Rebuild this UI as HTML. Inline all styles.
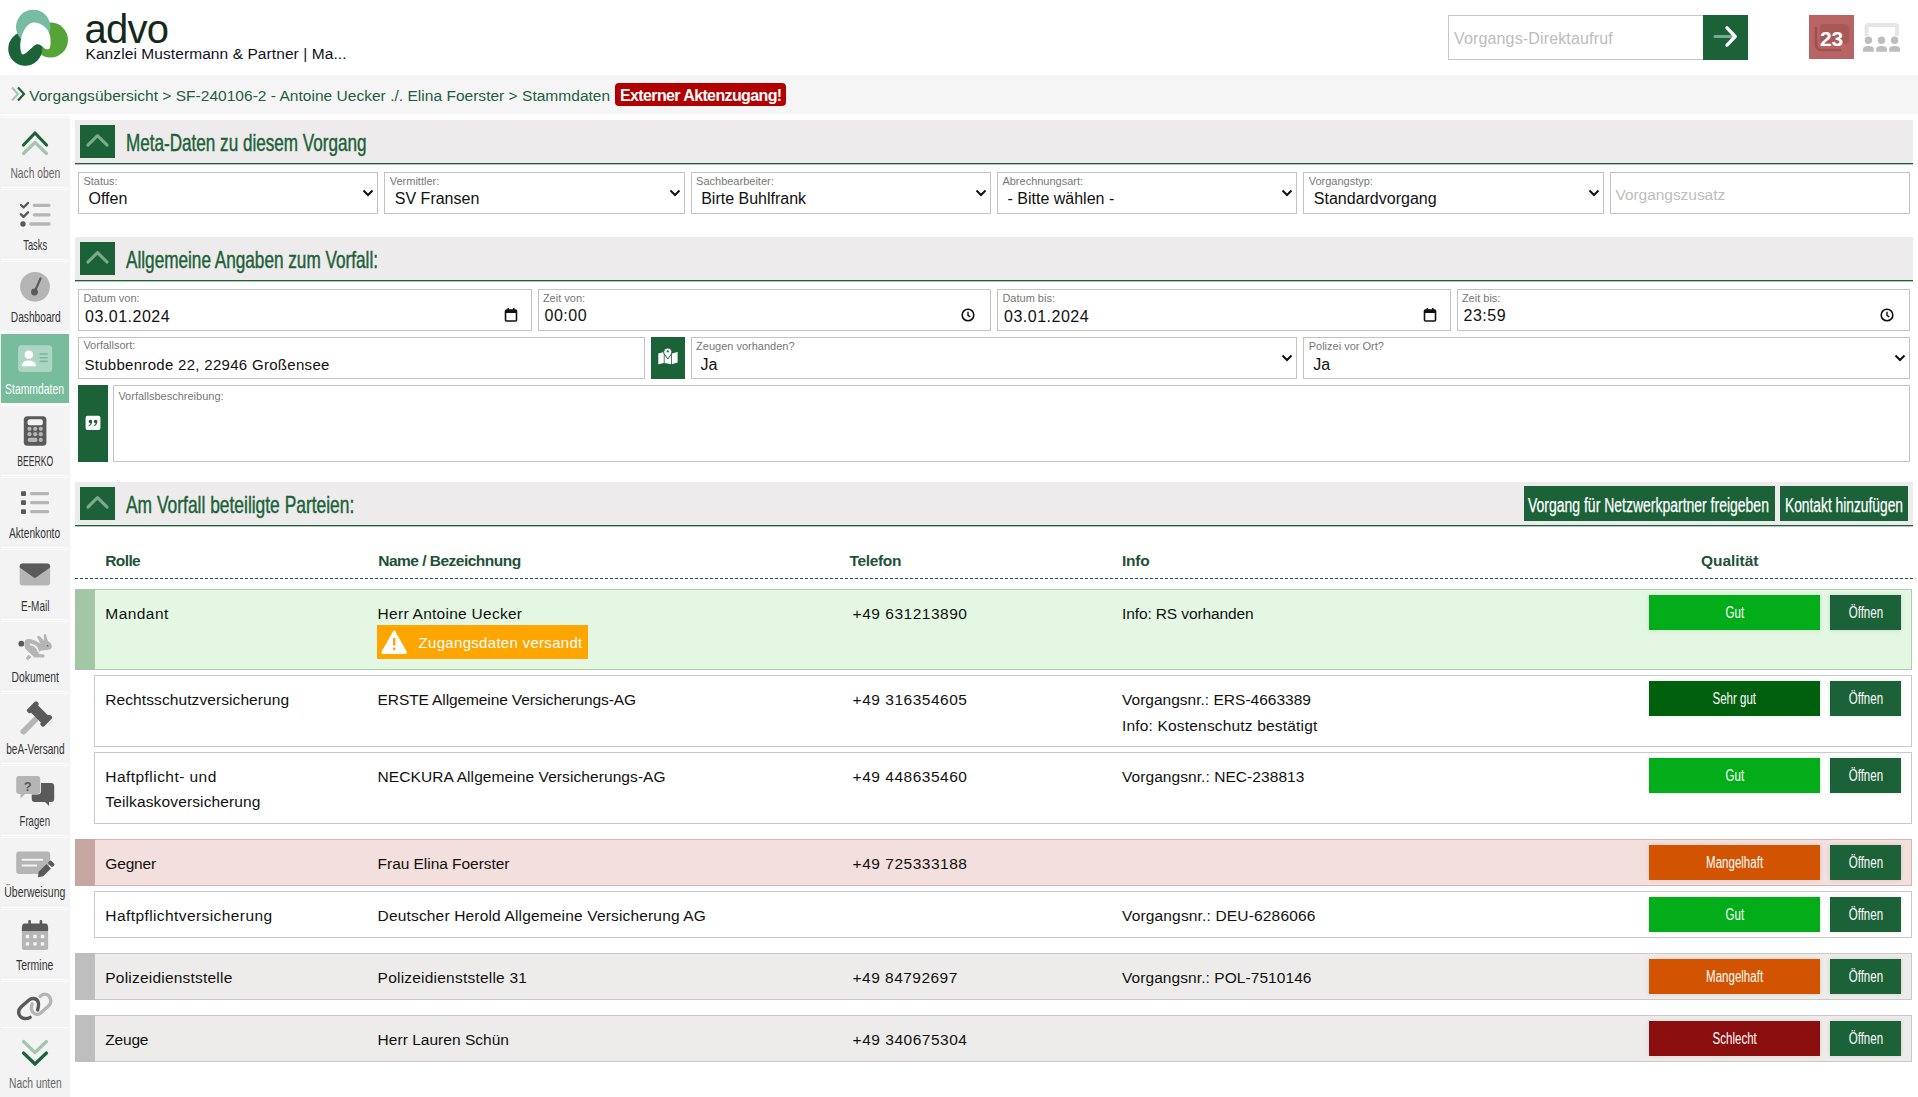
<!DOCTYPE html>
<html lang="de"><head><meta charset="utf-8"><title>advo – Stammdaten</title>
<style>
html,body{margin:0;padding:0;}
body{width:1918px;height:1097px;position:relative;overflow:hidden;background:#ffffff;font-family:"Liberation Sans", sans-serif;}
svg{display:block;overflow:visible;}
</style></head><body>
<svg style="position:absolute;left:0px;top:0px;" width="75" height="72" viewBox="0 0 75 72"><circle cx="50.5" cy="40" r="17.5" fill="#56a338"/><circle cx="25.2" cy="48.8" r="17" fill="#1b6338"/><circle cx="33.2" cy="27" r="17.2" fill="#77bba2"/><path d="M20.7 40.6 C22.5 30 28 22.5 34 22.5 C41 22.5 48.5 28 50 36 C50.8 40 51 46 49.5 48.5 C48 50 45.5 49.5 43.5 47.5 C41 45 38.5 43.5 36 44.5 C33 46 29.5 50.5 26 53 C23.5 55 21.5 55 21 52 C20 48 20 44 20.7 40.6 Z" fill="#ffffff"/></svg>
<div style="position:absolute;left:84.5px;top:8.74px;font-size:40px;line-height:40px;color:#15291b;font-weight:normal;letter-spacing:-0.747px;white-space:nowrap;">advo</div>
<div style="position:absolute;left:85.5px;top:46.38px;font-size:15.5px;line-height:15.5px;color:#111122;font-weight:normal;letter-spacing:0.081px;white-space:nowrap;">Kanzlei Mustermann &amp; Partner | Ma...</div>
<div style="position:absolute;left:1448px;top:15px;width:256px;height:45px;box-sizing:border-box;border:1px solid #c6c6c6;background:#fff;"></div>
<div style="position:absolute;left:1454px;top:30.76px;font-size:16px;line-height:16px;color:#bdbdbd;font-weight:normal;letter-spacing:0.15px;white-space:nowrap;">Vorgangs-Direktaufruf</div>
<div style="position:absolute;left:1703px;top:15px;width:45px;height:45px;background:#1c6239;"></div>
<svg style="position:absolute;left:1703px;top:15px;" width="45" height="44" viewBox="0 0 45 44"><path d="M12 21.5 H31" stroke="#7fa98f" stroke-width="3" stroke-linecap="round"/><path d="M24 12.8 L32.2 21.5 L24 30.2" stroke="#fff" stroke-width="3.3" fill="none" stroke-linecap="round" stroke-linejoin="round"/></svg>
<div style="position:absolute;left:1809px;top:15px;width:45px;height:44px;background:#b86464;"></div>
<svg style="position:absolute;left:1809px;top:15px;" width="45" height="44" viewBox="0 0 45 44"><rect x="11" y="9" width="29" height="20" rx="4" fill="#a95858"/><path d="M7 13 V29 Q7 35 13 35 H31" stroke="#a14f4f" stroke-width="2.6" fill="none" stroke-linecap="round"/></svg>
<div style="position:absolute;left:1820px;top:27.92px;font-size:21px;line-height:21px;color:#ffffff;font-weight:bold;letter-spacing:-0.3px;white-space:nowrap;">23</div>
<svg style="position:absolute;left:1860px;top:18px;" width="45" height="40" viewBox="0 0 45 40"><path d="M6.5 18 V9 Q6.5 7 8.5 7 H35 Q37 7 37 9 V18" stroke="#e6e6e6" stroke-width="4" fill="none"/><circle cx="8.4" cy="22.3" r="3.7" fill="#bdbdbd"/><circle cx="21.5" cy="22.3" r="3.7" fill="#bdbdbd"/><circle cx="34.6" cy="22.3" r="3.7" fill="#bdbdbd"/><path d="M3 33.7 V31 Q3 28 8.4 28 Q13.8 28 13.8 31 V33.7 Z" fill="#bdbdbd"/><path d="M16.1 33.7 V31 Q16.1 28 21.5 28 Q26.9 28 26.9 31 V33.7 Z" fill="#bdbdbd"/><path d="M29.2 33.7 V31 Q29.2 28 34.6 28 Q40 28 40 31 V33.7 Z" fill="#bdbdbd"/></svg>
<div style="position:absolute;left:0px;top:75px;width:1918px;height:39px;background:#f5f5f5;"></div>
<svg style="position:absolute;left:8px;top:84px;" width="22" height="22" viewBox="0 0 22 22"><path d="M4 3.5 L10 10 L4 16.5" stroke="#a9c7b1" stroke-width="2.2" fill="none"/><path d="M10 3.5 L16 10 L10 16.5" stroke="#1c6239" stroke-width="2.2" fill="none"/></svg>
<div style="position:absolute;left:29.2px;top:88.28px;font-size:15.5px;line-height:15.5px;color:#1e5e40;font-weight:normal;letter-spacing:0.025px;white-space:nowrap;">Vorgangsübersicht &gt; SF-240106-2 - Antoine Uecker ./. Elina Foerster &gt; Stammdaten</div>
<div style="position:absolute;left:615px;top:83px;width:171px;height:23px;background:#b00000;border-radius:4px;"></div>
<div style="position:absolute;left:620px;top:88.46px;font-size:16px;line-height:16px;color:#ffffff;font-weight:bold;letter-spacing:-0.62px;white-space:nowrap;">Externer Aktenzugang!</div>
<div style="position:absolute;left:0px;top:116px;width:70px;height:981px;background:#f3f3f3;"></div>
<div style="position:absolute;left:1px;top:117px;width:68px;height:1px;background:#ffffff;"></div>
<div style="position:absolute;left:1px;top:187px;width:68px;height:1px;background:#ffffff;"></div>
<div style="position:absolute;left:1px;top:189px;width:68px;height:1px;background:#ffffff;"></div>
<div style="position:absolute;left:1px;top:259px;width:68px;height:1px;background:#ffffff;"></div>
<div style="position:absolute;left:1px;top:261px;width:68px;height:1px;background:#ffffff;"></div>
<div style="position:absolute;left:1px;top:331px;width:68px;height:1px;background:#ffffff;"></div>
<div style="position:absolute;left:1px;top:333px;width:68px;height:1px;background:#ffffff;"></div>
<div style="position:absolute;left:1px;top:403px;width:68px;height:1px;background:#ffffff;"></div>
<div style="position:absolute;left:1px;top:405px;width:68px;height:1px;background:#ffffff;"></div>
<div style="position:absolute;left:1px;top:475px;width:68px;height:1px;background:#ffffff;"></div>
<div style="position:absolute;left:1px;top:477px;width:68px;height:1px;background:#ffffff;"></div>
<div style="position:absolute;left:1px;top:547px;width:68px;height:1px;background:#ffffff;"></div>
<div style="position:absolute;left:1px;top:549px;width:68px;height:1px;background:#ffffff;"></div>
<div style="position:absolute;left:1px;top:619px;width:68px;height:1px;background:#ffffff;"></div>
<div style="position:absolute;left:1px;top:621px;width:68px;height:1px;background:#ffffff;"></div>
<div style="position:absolute;left:1px;top:691px;width:68px;height:1px;background:#ffffff;"></div>
<div style="position:absolute;left:1px;top:693px;width:68px;height:1px;background:#ffffff;"></div>
<div style="position:absolute;left:1px;top:763px;width:68px;height:1px;background:#ffffff;"></div>
<div style="position:absolute;left:1px;top:765px;width:68px;height:1px;background:#ffffff;"></div>
<div style="position:absolute;left:1px;top:835px;width:68px;height:1px;background:#ffffff;"></div>
<div style="position:absolute;left:1px;top:837px;width:68px;height:1px;background:#ffffff;"></div>
<div style="position:absolute;left:1px;top:907px;width:68px;height:1px;background:#ffffff;"></div>
<div style="position:absolute;left:1px;top:909px;width:68px;height:1px;background:#ffffff;"></div>
<div style="position:absolute;left:1px;top:979px;width:68px;height:1px;background:#ffffff;"></div>
<div style="position:absolute;left:1px;top:981px;width:68px;height:1px;background:#ffffff;"></div>
<div style="position:absolute;left:1px;top:1027px;width:68px;height:1px;background:#ffffff;"></div>
<div style="position:absolute;left:1px;top:334px;width:68px;height:69px;background:#77bc9c;"></div>
<svg style="position:absolute;left:15px;top:122px;" width="40" height="40" viewBox="0 0 40 40"><path d="M8.5 23 L20 11 L31.5 23" stroke="#1c6239" stroke-width="3.2" fill="none" stroke-linecap="round" stroke-linejoin="round"/><path d="M8.5 31.5 L20 20.5 L31.5 31.5" stroke="#a3c5ae" stroke-width="3.2" fill="none" stroke-linecap="round" stroke-linejoin="round"/></svg>
<div style="position:absolute;left:-264.95px;width:600px;top:165.20px;text-align:center;font-size:15px;line-height:15px;color:#666666;font-weight:normal;letter-spacing:0px;white-space:nowrap;"><span style="display:inline-block;transform:scaleX(0.685);transform-origin:50% 0;">Nach oben</span></div>
<svg style="position:absolute;left:15px;top:198px;" width="40" height="34" viewBox="0 0 40 34"><path d="M6 7 L8.5 9.5 L13 5" stroke="#5a5a5a" stroke-width="2.4" fill="none" stroke-linecap="round" stroke-linejoin="round"/><path d="M6 16.3 L8.5 18.8 L13 14.3" stroke="#5a5a5a" stroke-width="2.4" fill="none" stroke-linecap="round" stroke-linejoin="round"/><circle cx="8" cy="26" r="2.7" fill="#5a5a5a"/><path d="M19.3 7.3 H34 M19.3 16.8 H34 M15.8 26 H34" stroke="#b5b5b5" stroke-width="3.3" stroke-linecap="round"/></svg>
<div style="position:absolute;left:-264.9px;width:600px;top:237.30px;text-align:center;font-size:15px;line-height:15px;color:#333333;font-weight:normal;letter-spacing:0px;white-space:nowrap;"><span style="display:inline-block;transform:scaleX(0.6233);transform-origin:50% 0;">Tasks</span></div>
<svg style="position:absolute;left:15px;top:267px;" width="40" height="40" viewBox="0 0 40 40"><circle cx="20" cy="19.8" r="14.9" fill="#b5b5b5"/><path d="M25.5 11.5 L20 24" stroke="#5a5a5a" stroke-width="2.2" stroke-linecap="round"/><circle cx="19.5" cy="25" r="3.4" fill="#5a5a5a"/></svg>
<div style="position:absolute;left:-264.8px;width:600px;top:309.00px;text-align:center;font-size:15px;line-height:15px;color:#333333;font-weight:normal;letter-spacing:0px;white-space:nowrap;"><span style="display:inline-block;transform:scaleX(0.6786);transform-origin:50% 0;">Dashboard</span></div>
<svg style="position:absolute;left:15px;top:340px;" width="40" height="40" viewBox="0 0 40 40"><rect x="3.1" y="5.2" width="34.1" height="26.8" rx="3.5" fill="#acd6c3"/><circle cx="13.8" cy="14.8" r="4.3" fill="#fff"/><path d="M6.8 26.3 Q6.8 20.4 13.8 20.4 Q20.9 20.4 20.9 26.3 Z" fill="#fff"/><path d="M24.6 14 H32.8 M24.6 17.7 H32.8 M24.6 21.4 H32.8" stroke="#76bb9b" stroke-width="1.6"/></svg>
<div style="position:absolute;left:-265.1px;width:600px;top:381.00px;text-align:center;font-size:15px;line-height:15px;color:#ffffff;font-weight:normal;letter-spacing:0px;white-space:nowrap;"><span style="display:inline-block;transform:scaleX(0.6914);transform-origin:50% 0;">Stammdaten</span></div>
<svg style="position:absolute;left:15px;top:410px;" width="40" height="40" viewBox="0 0 40 40"><rect x="8.8" y="6.2" width="22.6" height="29.6" rx="3.6" fill="#5a5a5a"/><rect x="12.6" y="9.2" width="15.2" height="6" rx="2" fill="#f3f3f3"/><circle cx="14.5" cy="18.8" r="2.1" fill="#b5b5b5"/><circle cx="14.5" cy="24.2" r="2.1" fill="#b5b5b5"/><circle cx="20.2" cy="18.8" r="2.1" fill="#b5b5b5"/><circle cx="20.2" cy="24.2" r="2.1" fill="#b5b5b5"/><circle cx="25.8" cy="18.8" r="2.1" fill="#b5b5b5"/><circle cx="25.8" cy="24.2" r="2.1" fill="#b5b5b5"/><rect x="12.6" y="27.8" width="10" height="4.2" rx="2.1" fill="#b5b5b5"/><circle cx="25.8" cy="29.9" r="2.1" fill="#b5b5b5"/></svg>
<div style="position:absolute;left:-265px;width:600px;top:453.10px;text-align:center;font-size:15px;line-height:15px;color:#333333;font-weight:normal;letter-spacing:0px;white-space:nowrap;"><span style="display:inline-block;transform:scaleX(0.5758);transform-origin:50% 0;">BEERKO</span></div>
<svg style="position:absolute;left:15px;top:485px;" width="40" height="40" viewBox="0 0 40 40"><rect x="6" y="6.3" width="5" height="4.6" rx="1" fill="#5a5a5a"/><rect x="6" y="15.3" width="5" height="4.6" rx="1" fill="#5a5a5a"/><rect x="6" y="24.3" width="5" height="4.6" rx="1" fill="#5a5a5a"/><path d="M16.5 8.6 H32.7 M16.5 17.6 H32.7 M16.5 26.6 H32.7" stroke="#b5b5b5" stroke-width="3.2" stroke-linecap="round"/></svg>
<div style="position:absolute;left:-265.4px;width:600px;top:525.30px;text-align:center;font-size:15px;line-height:15px;color:#333333;font-weight:normal;letter-spacing:0px;white-space:nowrap;"><span style="display:inline-block;transform:scaleX(0.6822);transform-origin:50% 0;">Aktenkonto</span></div>
<svg style="position:absolute;left:15px;top:555px;" width="40" height="40" viewBox="0 0 40 40"><rect x="4.7" y="8.5" width="30.4" height="22" rx="3" fill="#b5b5b5"/><path d="M4.7 11.5 Q4.7 8.5 7.7 8.5 H32.1 Q35.1 8.5 35.1 11.5 V12.5 L21 22.5 Q19.9 23.3 18.8 22.5 L4.7 12.5 Z" fill="#5a5a5a"/></svg>
<div style="position:absolute;left:-265.1px;width:600px;top:597.50px;text-align:center;font-size:15px;line-height:15px;color:#333333;font-weight:normal;letter-spacing:0px;white-space:nowrap;"><span style="display:inline-block;transform:scaleX(0.6682);transform-origin:50% 0;">E-Mail</span></div>
<svg style="position:absolute;left:15px;top:627px;" width="40" height="40" viewBox="0 0 40 40"><circle cx="6.3" cy="16.7" r="2.9" fill="#5a5a5a"/><path d="M9.5 16 C9.5 13 11 12 13.5 12 C17 12 21.5 14 25.5 16.5 L22.5 11 C21.5 9 23 8.2 24.5 9.2 C26 10.5 28 12.5 29 14 L28.8 9 C28.8 6.5 30.5 6.5 31.2 8.5 L33 14.3 C35.5 15.5 37 17.5 36.8 19.8 C36.5 22 35 22.8 33 22.8 L27 23.4 C25.5 23.6 24.3 24 24 25 L23.5 27 L28 27.2 C30 27.2 30 30.6 28 30.6 L19.5 30.6 L10 21.5 C9.6 20 9.5 18 9.5 16 Z" fill="#b5b5b5"/><path d="M15.5 17.4 C19 18 22.5 20.5 23.3 24.5" stroke="#f3f3f3" stroke-width="1.6" fill="none" stroke-linecap="round"/><path d="M11.3 31.5 L13.4 28.3 L16 30 L12.5 32.8 Z" fill="#b5b5b5" stroke="#b5b5b5" stroke-width="1" stroke-linejoin="round"/><circle cx="32.5" cy="18.7" r="0.8" fill="#5a5a5a"/></svg>
<div style="position:absolute;left:-264.8px;width:600px;top:669.10px;text-align:center;font-size:15px;line-height:15px;color:#333333;font-weight:normal;letter-spacing:0px;white-space:nowrap;"><span style="display:inline-block;transform:scaleX(0.6904);transform-origin:50% 0;">Dokument</span></div>
<svg style="position:absolute;left:15px;top:700px;" width="40" height="40" viewBox="0 0 40 40"><path d="M8.5 31.5 L20 20" stroke="#b5b5b5" stroke-width="6" stroke-linecap="round"/><g transform="rotate(45 24.5 14)"><rect x="14.5" y="9" width="20" height="10" rx="1" fill="#5a5a5a"/><rect x="12.5" y="7" width="5" height="14" rx="1.8" fill="#5a5a5a"/><rect x="31.5" y="7" width="5" height="14" rx="1.8" fill="#5a5a5a"/></g></svg>
<div style="position:absolute;left:-264.85px;width:600px;top:740.70px;text-align:center;font-size:15px;line-height:15px;color:#333333;font-weight:normal;letter-spacing:0px;white-space:nowrap;"><span style="display:inline-block;transform:scaleX(0.6722);transform-origin:50% 0;">beA-Versand</span></div>
<svg style="position:absolute;left:15px;top:770px;" width="40" height="40" viewBox="0 0 40 40"><path d="M4 6 Q1.2 6 1.2 9 V21 Q1.2 24 4 24 H5.5 V28.5 L10 24 H22.5 Q25.3 24 25.3 21 V9 Q25.3 6 22.5 6 Z" fill="#b5b5b5"/><path d="M20 13 H36 Q39.2 13 39.2 16 V29 Q39.2 32 36 32 H34 V36 L30 32 H19.7 Q16.7 32 16.7 29 V24.5 H22.5 Q26 24.5 26 21 V13 Z" fill="#5a5a5a"/><text x="12.7" y="20.5" font-family="Liberation Sans" font-weight="bold" font-size="13" fill="#5a5a5a" text-anchor="middle">?</text></svg>
<div style="position:absolute;left:-265px;width:600px;top:813.30px;text-align:center;font-size:15px;line-height:15px;color:#333333;font-weight:normal;letter-spacing:0px;white-space:nowrap;"><span style="display:inline-block;transform:scaleX(0.6396);transform-origin:50% 0;">Fragen</span></div>
<svg style="position:absolute;left:15px;top:845px;" width="40" height="40" viewBox="0 0 40 40"><path d="M4.2 6.5 Q1.2 6.5 1.2 9.5 V26 Q1.2 29 4.2 29 H25 L35.2 19 V9.5 Q35.2 6.5 32.2 6.5 Z" fill="#b5b5b5"/><path d="M6.8 14.8 H28 M6.8 20.4 H22" stroke="#f3f3f3" stroke-width="2"/><g transform="rotate(-45 22.8 32.2)"><path d="M22.8 32.2 L27.3 29 H38.3 V35.4 H27.3 Z" fill="#5a5a5a"/><rect x="39.8" y="29" width="4.2" height="6.4" rx="1.4" fill="#5a5a5a"/></g></svg>
<div style="position:absolute;left:-264.9px;width:600px;top:884.30px;text-align:center;font-size:15px;line-height:15px;color:#333333;font-weight:normal;letter-spacing:0px;white-space:nowrap;"><span style="display:inline-block;transform:scaleX(0.6968);transform-origin:50% 0;">Überweisung</span></div>
<svg style="position:absolute;left:15px;top:915px;" width="40" height="40" viewBox="0 0 40 40"><rect x="6.9" y="10.4" width="26.2" height="24.6" rx="2.5" fill="#b5b5b5"/><path d="M6.9 12.9 Q6.9 8.4 9.4 8.4 H30.6 Q33.1 8.4 33.1 12.9 V16 H6.9 Z" fill="#5a5a5a"/><rect x="13.3" y="4.9" width="2.6" height="5" rx="1" fill="#5a5a5a"/><rect x="24.6" y="4.9" width="2.6" height="5" rx="1" fill="#5a5a5a"/><rect x="10.8" y="19.8" width="3.4" height="3.4" fill="#f3f3f3"/><rect x="10.8" y="27.2" width="3.4" height="3.4" fill="#f3f3f3"/><rect x="18.3" y="19.8" width="3.4" height="3.4" fill="#f3f3f3"/><rect x="18.3" y="27.2" width="3.4" height="3.4" fill="#f3f3f3"/><rect x="25.8" y="19.8" width="3.4" height="3.4" fill="#f3f3f3"/><rect x="25.8" y="27.2" width="3.4" height="3.4" fill="#f3f3f3"/></svg>
<div style="position:absolute;left:-265.25px;width:600px;top:957.10px;text-align:center;font-size:15px;line-height:15px;color:#333333;font-weight:normal;letter-spacing:0px;white-space:nowrap;"><span style="display:inline-block;transform:scaleX(0.6991);transform-origin:50% 0;">Termine</span></div>
<svg style="position:absolute;left:0px;top:980px;" width="70" height="50" viewBox="0 0 70 50"><path d="M30.1 37.4 C27 39 22 39.5 19.6 35.5 C18 32.5 18.5 29.5 21 27 L29 20 C32 17.5 36.5 18 38 21.5 C39 24 38.5 27 37.6 29.9" stroke="#5a5a5a" stroke-width="3.4" fill="none" stroke-linecap="round"/><path d="M32.2 23.8 C31 27 31 30 33 32.3 C35 34.5 38.5 35 41 32.8 L49 25.5 C51.5 23 51.5 18.5 48.5 15.5 C46 13.5 42.5 13.5 40.2 16.5" stroke="#b5b5b5" stroke-width="3.4" fill="none" stroke-linecap="round"/></svg>
<svg style="position:absolute;left:15px;top:1033px;" width="40" height="40" viewBox="0 0 40 40"><path d="M8.5 8.5 L20 19.5 L31.5 8.5" stroke="#a3c5ae" stroke-width="3.2" fill="none" stroke-linecap="round" stroke-linejoin="round"/><path d="M8.5 20 L20 31 L31.5 20" stroke="#1c6239" stroke-width="3.2" fill="none" stroke-linecap="round" stroke-linejoin="round"/></svg>
<div style="position:absolute;left:-265px;width:600px;top:1075.20px;text-align:center;font-size:15px;line-height:15px;color:#666666;font-weight:normal;letter-spacing:0px;white-space:nowrap;"><span style="display:inline-block;transform:scaleX(0.6843);transform-origin:50% 0;">Nach unten</span></div>
<div style="position:absolute;left:75px;top:120px;width:1838px;height:43px;background:#edebeb;"></div>
<div style="position:absolute;left:75px;top:163px;width:1838px;height:1px;background:#1c6239;"></div>
<div style="position:absolute;left:75px;top:164px;width:1838px;height:1px;background:rgba(28,98,57,0.35);"></div>
<div style="position:absolute;left:80px;top:125px;width:35px;height:33px;background:#1c6239;"></div>
<svg style="position:absolute;left:80px;top:125px;" width="35" height="33" viewBox="0 0 35 33"><path d="M7.9 20.1 L17.5 10.6 L27.1 20.1" stroke="#7fa98f" stroke-width="3" fill="none" stroke-linecap="round" stroke-linejoin="round"/></svg>
<div style="position:absolute;left:125.5px;top:130.88px;font-size:24px;line-height:24px;color:#1c6239;font-weight:normal;letter-spacing:0px;white-space:nowrap;transform:scaleX(0.7125);transform-origin:0 0;-webkit-text-stroke:0.45px #1c6239;">Meta-Daten zu diesem Vorgang</div>
<div style="position:absolute;left:75px;top:237px;width:1838px;height:43px;background:#edebeb;"></div>
<div style="position:absolute;left:75px;top:280px;width:1838px;height:1px;background:#1c6239;"></div>
<div style="position:absolute;left:75px;top:281px;width:1838px;height:1px;background:rgba(28,98,57,0.35);"></div>
<div style="position:absolute;left:80px;top:242px;width:35px;height:33px;background:#1c6239;"></div>
<svg style="position:absolute;left:80px;top:242px;" width="35" height="33" viewBox="0 0 35 33"><path d="M7.9 20.1 L17.5 10.6 L27.1 20.1" stroke="#7fa98f" stroke-width="3" fill="none" stroke-linecap="round" stroke-linejoin="round"/></svg>
<div style="position:absolute;left:125.5px;top:247.88px;font-size:24px;line-height:24px;color:#1c6239;font-weight:normal;letter-spacing:0px;white-space:nowrap;transform:scaleX(0.7154);transform-origin:0 0;-webkit-text-stroke:0.45px #1c6239;">Allgemeine Angaben zum Vorfall:</div>
<div style="position:absolute;left:75px;top:482px;width:1838px;height:43px;background:#edebeb;"></div>
<div style="position:absolute;left:75px;top:525px;width:1838px;height:1px;background:#1c6239;"></div>
<div style="position:absolute;left:75px;top:526px;width:1838px;height:1px;background:rgba(28,98,57,0.35);"></div>
<div style="position:absolute;left:80px;top:487px;width:35px;height:33px;background:#1c6239;"></div>
<svg style="position:absolute;left:80px;top:487px;" width="35" height="33" viewBox="0 0 35 33"><path d="M7.9 20.1 L17.5 10.6 L27.1 20.1" stroke="#7fa98f" stroke-width="3" fill="none" stroke-linecap="round" stroke-linejoin="round"/></svg>
<div style="position:absolute;left:125.5px;top:492.88px;font-size:24px;line-height:24px;color:#1c6239;font-weight:normal;letter-spacing:0px;white-space:nowrap;transform:scaleX(0.7251);transform-origin:0 0;-webkit-text-stroke:0.45px #1c6239;">Am Vorfall beteiligte Parteien:</div>
<div style="position:absolute;left:1524px;top:486px;width:251px;height:35px;background:#1c6239;"></div>
<div style="position:absolute;left:1528.4px;top:495.07px;font-size:20px;line-height:20px;color:#fff;font-weight:normal;letter-spacing:0px;white-space:nowrap;transform:scaleX(0.699);transform-origin:0 0;-webkit-text-stroke:0.25px #fff;">Vorgang für Netzwerkpartner freigeben</div>
<div style="position:absolute;left:1780px;top:486px;width:128px;height:35px;background:#1c6239;"></div>
<div style="position:absolute;left:1785px;top:495.07px;font-size:20px;line-height:20px;color:#fff;font-weight:normal;letter-spacing:0px;white-space:nowrap;transform:scaleX(0.689);transform-origin:0 0;-webkit-text-stroke:0.25px #fff;">Kontakt hinzufügen</div>
<div style="position:absolute;left:78.0px;top:172px;width:300.33px;height:42px;box-sizing:border-box;border:1px solid #c3c3c3;background:#fff;"></div>
<div style="position:absolute;left:83.4px;top:175.99px;font-size:11px;line-height:11px;color:#777777;font-weight:normal;letter-spacing:0px;white-space:nowrap;">Status:</div>
<div style="position:absolute;left:88.5px;top:191.36px;font-size:16px;line-height:16px;color:#111111;font-weight:normal;letter-spacing:0px;white-space:nowrap;">Offen</div>
<svg style="position:absolute;left:361.33px;top:188px;" width="14" height="10" viewBox="0 0 14 10"><path d="M2.5 2.5 L7 7 L11.5 2.5" stroke="#111" stroke-width="2" fill="none"/></svg>
<div style="position:absolute;left:384.33px;top:172px;width:300.33px;height:42px;box-sizing:border-box;border:1px solid #c3c3c3;background:#fff;"></div>
<div style="position:absolute;left:389.72999999999996px;top:175.99px;font-size:11px;line-height:11px;color:#777777;font-weight:normal;letter-spacing:0px;white-space:nowrap;">Vermittler:</div>
<div style="position:absolute;left:394.83px;top:191.36px;font-size:16px;line-height:16px;color:#111111;font-weight:normal;letter-spacing:0px;white-space:nowrap;">SV Fransen</div>
<svg style="position:absolute;left:667.66px;top:188px;" width="14" height="10" viewBox="0 0 14 10"><path d="M2.5 2.5 L7 7 L11.5 2.5" stroke="#111" stroke-width="2" fill="none"/></svg>
<div style="position:absolute;left:690.67px;top:172px;width:300.33px;height:42px;box-sizing:border-box;border:1px solid #c3c3c3;background:#fff;"></div>
<div style="position:absolute;left:696.0699999999999px;top:175.99px;font-size:11px;line-height:11px;color:#777777;font-weight:normal;letter-spacing:0px;white-space:nowrap;">Sachbearbeiter:</div>
<div style="position:absolute;left:701.17px;top:191.36px;font-size:16px;line-height:16px;color:#111111;font-weight:normal;letter-spacing:0px;white-space:nowrap;">Birte Buhlfrank</div>
<svg style="position:absolute;left:974.0px;top:188px;" width="14" height="10" viewBox="0 0 14 10"><path d="M2.5 2.5 L7 7 L11.5 2.5" stroke="#111" stroke-width="2" fill="none"/></svg>
<div style="position:absolute;left:997.0px;top:172px;width:300.33px;height:42px;box-sizing:border-box;border:1px solid #c3c3c3;background:#fff;"></div>
<div style="position:absolute;left:1002.4px;top:175.99px;font-size:11px;line-height:11px;color:#777777;font-weight:normal;letter-spacing:0px;white-space:nowrap;">Abrechnungsart:</div>
<div style="position:absolute;left:1007.5px;top:191.36px;font-size:16px;line-height:16px;color:#111111;font-weight:normal;letter-spacing:0px;white-space:nowrap;">- Bitte wählen -</div>
<svg style="position:absolute;left:1280.33px;top:188px;" width="14" height="10" viewBox="0 0 14 10"><path d="M2.5 2.5 L7 7 L11.5 2.5" stroke="#111" stroke-width="2" fill="none"/></svg>
<div style="position:absolute;left:1303.33px;top:172px;width:300.33px;height:42px;box-sizing:border-box;border:1px solid #c3c3c3;background:#fff;"></div>
<div style="position:absolute;left:1308.73px;top:175.99px;font-size:11px;line-height:11px;color:#777777;font-weight:normal;letter-spacing:0px;white-space:nowrap;">Vorgangstyp:</div>
<div style="position:absolute;left:1313.83px;top:191.36px;font-size:16px;line-height:16px;color:#111111;font-weight:normal;letter-spacing:0px;white-space:nowrap;">Standardvorgang</div>
<svg style="position:absolute;left:1586.6599999999999px;top:188px;" width="14" height="10" viewBox="0 0 14 10"><path d="M2.5 2.5 L7 7 L11.5 2.5" stroke="#111" stroke-width="2" fill="none"/></svg>
<div style="position:absolute;left:1609.67px;top:172px;width:300.33px;height:42px;box-sizing:border-box;border:1px solid #c3c3c3;background:#fff;"></div>
<div style="position:absolute;left:1615.47px;top:187.48px;font-size:15.5px;line-height:15.5px;color:#bdbdbd;font-weight:normal;letter-spacing:-0.046px;white-space:nowrap;">Vorgangszusatz</div>
<div style="position:absolute;left:78.0px;top:289px;width:453.5px;height:42px;box-sizing:border-box;border:1px solid #c3c3c3;background:#fff;"></div>
<div style="position:absolute;left:83.4px;top:292.59px;font-size:11px;line-height:11px;color:#777777;font-weight:normal;letter-spacing:0px;white-space:nowrap;">Datum von:</div>
<div style="position:absolute;left:85.0px;top:309.06px;font-size:16px;line-height:16px;color:#111111;font-weight:normal;letter-spacing:0.5px;white-space:nowrap;">03.01.2024</div>
<svg style="position:absolute;left:503.5px;top:307px;" width="14" height="16" viewBox="0 0 14 16"><rect x="1.5" y="3" width="11" height="11" rx="1" stroke="#111" stroke-width="1.6" fill="none"/><rect x="1.5" y="3" width="11" height="3" fill="#111"/><path d="M4.2 1 V3.5 M9.8 1 V3.5" stroke="#111" stroke-width="1.5"/></svg>
<div style="position:absolute;left:537.5px;top:289px;width:453.5px;height:42px;box-sizing:border-box;border:1px solid #c3c3c3;background:#fff;"></div>
<div style="position:absolute;left:542.9px;top:292.59px;font-size:11px;line-height:11px;color:#777777;font-weight:normal;letter-spacing:0px;white-space:nowrap;">Zeit von:</div>
<div style="position:absolute;left:544.5px;top:308.06px;font-size:16px;line-height:16px;color:#111111;font-weight:normal;letter-spacing:0.5px;white-space:nowrap;">00:00</div>
<svg style="position:absolute;left:959.5px;top:307px;" width="16" height="16" viewBox="0 0 16 16"><circle cx="8" cy="8" r="5.8" stroke="#111" stroke-width="1.6" fill="none"/><path d="M8 4.8 V8.3 L10.3 10" stroke="#111" stroke-width="1.4" fill="none"/></svg>
<div style="position:absolute;left:997.0px;top:289px;width:453.5px;height:42px;box-sizing:border-box;border:1px solid #c3c3c3;background:#fff;"></div>
<div style="position:absolute;left:1002.4px;top:292.59px;font-size:11px;line-height:11px;color:#777777;font-weight:normal;letter-spacing:0px;white-space:nowrap;">Datum bis:</div>
<div style="position:absolute;left:1004.0px;top:309.06px;font-size:16px;line-height:16px;color:#111111;font-weight:normal;letter-spacing:0.5px;white-space:nowrap;">03.01.2024</div>
<svg style="position:absolute;left:1422.5px;top:307px;" width="14" height="16" viewBox="0 0 14 16"><rect x="1.5" y="3" width="11" height="11" rx="1" stroke="#111" stroke-width="1.6" fill="none"/><rect x="1.5" y="3" width="11" height="3" fill="#111"/><path d="M4.2 1 V3.5 M9.8 1 V3.5" stroke="#111" stroke-width="1.5"/></svg>
<div style="position:absolute;left:1456.5px;top:289px;width:453.5px;height:42px;box-sizing:border-box;border:1px solid #c3c3c3;background:#fff;"></div>
<div style="position:absolute;left:1461.9px;top:292.59px;font-size:11px;line-height:11px;color:#777777;font-weight:normal;letter-spacing:0px;white-space:nowrap;">Zeit bis:</div>
<div style="position:absolute;left:1463.5px;top:308.06px;font-size:16px;line-height:16px;color:#111111;font-weight:normal;letter-spacing:0.5px;white-space:nowrap;">23:59</div>
<svg style="position:absolute;left:1878.5px;top:307px;" width="16" height="16" viewBox="0 0 16 16"><circle cx="8" cy="8" r="5.8" stroke="#111" stroke-width="1.6" fill="none"/><path d="M8 4.8 V8.3 L10.3 10" stroke="#111" stroke-width="1.4" fill="none"/></svg>
<div style="position:absolute;left:78px;top:337px;width:567px;height:42px;box-sizing:border-box;border:1px solid #c3c3c3;background:#fff;"></div>
<div style="position:absolute;left:83.4px;top:340.49px;font-size:11px;line-height:11px;color:#777777;font-weight:normal;letter-spacing:0px;white-space:nowrap;">Vorfallsort:</div>
<div style="position:absolute;left:84.4px;top:357.20px;font-size:15px;line-height:15px;color:#111111;font-weight:normal;letter-spacing:0.3px;white-space:nowrap;">Stubbenrode 22, 22946 Großensee</div>
<div style="position:absolute;left:651px;top:337px;width:34px;height:42px;background:#1c6239;"></div>
<svg style="position:absolute;left:651px;top:337px;" width="34" height="42" viewBox="0 0 34 42"><path d="M7.3 16.5 L12.8 15 V26 L7.3 27.2 Z M13.6 15 L20 16.5 V27.2 L13.6 26 Z M20.8 16.5 L26.6 15 V25.6 L20.8 27.2 Z" fill="#fff"/><path d="M16.8 22 L13.1 16.8 A4.1 4.1 0 1 1 20.5 16.8 Z" fill="#fff" stroke="#1c6239" stroke-width="1" stroke-linejoin="round"/><circle cx="16.8" cy="14.4" r="1.1" fill="#1c6239"/></svg>
<div style="position:absolute;left:690.67px;top:337px;width:606.67px;height:42px;box-sizing:border-box;border:1px solid #c3c3c3;background:#fff;"></div>
<div style="position:absolute;left:696.0699999999999px;top:341.49px;font-size:11px;line-height:11px;color:#777777;font-weight:normal;letter-spacing:0px;white-space:nowrap;">Zeugen vorhanden?</div>
<div style="position:absolute;left:700.5px;top:357.06px;font-size:16px;line-height:16px;color:#111111;font-weight:normal;letter-spacing:0px;white-space:nowrap;">Ja</div>
<svg style="position:absolute;left:1280.34px;top:353px;" width="14" height="10" viewBox="0 0 14 10"><path d="M2.5 2.5 L7 7 L11.5 2.5" stroke="#111" stroke-width="2" fill="none"/></svg>
<div style="position:absolute;left:1303.33px;top:337px;width:606.67px;height:42px;box-sizing:border-box;border:1px solid #c3c3c3;background:#fff;"></div>
<div style="position:absolute;left:1308.73px;top:341.49px;font-size:11px;line-height:11px;color:#777777;font-weight:normal;letter-spacing:0px;white-space:nowrap;">Polizei vor Ort?</div>
<div style="position:absolute;left:1313.2px;top:357.06px;font-size:16px;line-height:16px;color:#111111;font-weight:normal;letter-spacing:0px;white-space:nowrap;">Ja</div>
<svg style="position:absolute;left:1893.0px;top:353px;" width="14" height="10" viewBox="0 0 14 10"><path d="M2.5 2.5 L7 7 L11.5 2.5" stroke="#111" stroke-width="2" fill="none"/></svg>
<div style="position:absolute;left:78px;top:385px;width:30px;height:77px;background:#1c6239;"></div>
<svg style="position:absolute;left:78px;top:385px;" width="30" height="77" viewBox="0 0 30 77"><rect x="7.6" y="30.8" width="14.8" height="14.2" rx="2" fill="#fff"/><path d="M10.6 36.5 A1.8 1.8 0 1 1 14.200000000000001 36.6 C14.200000000000001 38.8 13.0 40.5 10.8 41.2 L10.4 40.4 C11.5 39.8 12.3 39.1 12.5 38.2 A1.8 1.8 0 0 1 10.6 36.5 Z" fill="#1c6239"/><path d="M15.8 36.5 A1.8 1.8 0 1 1 19.400000000000002 36.6 C19.400000000000002 38.8 18.200000000000003 40.5 16.0 41.2 L15.600000000000001 40.4 C16.700000000000003 39.8 17.5 39.1 17.700000000000003 38.2 A1.8 1.8 0 0 1 15.8 36.5 Z" fill="#1c6239"/></svg>
<div style="position:absolute;left:113px;top:385px;width:1797px;height:77px;box-sizing:border-box;border:1px solid #c3c3c3;background:#fff;"></div>
<div style="position:absolute;left:118.4px;top:390.69px;font-size:11px;line-height:11px;color:#777777;font-weight:normal;letter-spacing:0px;white-space:nowrap;">Vorfallsbeschreibung:</div>
<div style="position:absolute;left:105.3px;top:553.38px;font-size:15.5px;line-height:15.5px;color:#1d5236;font-weight:bold;letter-spacing:-0.624px;white-space:nowrap;">Rolle</div>
<div style="position:absolute;left:378.2px;top:553.38px;font-size:15.5px;line-height:15.5px;color:#1d5236;font-weight:bold;letter-spacing:-0.505px;white-space:nowrap;">Name / Bezeichnung</div>
<div style="position:absolute;left:849.5px;top:553.38px;font-size:15.5px;line-height:15.5px;color:#1d5236;font-weight:bold;letter-spacing:-0.344px;white-space:nowrap;">Telefon</div>
<div style="position:absolute;left:1122px;top:553.38px;font-size:15.5px;line-height:15.5px;color:#1d5236;font-weight:bold;letter-spacing:-0.202px;white-space:nowrap;">Info</div>
<div style="position:absolute;left:1701px;top:553.38px;font-size:15.5px;line-height:15.5px;color:#1d5236;font-weight:bold;letter-spacing:-0.029px;white-space:nowrap;">Qualität</div>
<div style="position:absolute;left:75px;top:578px;width:1838px;height:1px;background-image:linear-gradient(to right,#175e36 60%,transparent 60%);background-size:5px 1px;"></div>
<div style="position:absolute;left:75px;top:589px;width:1837px;height:81px;box-sizing:border-box;border:1px solid #a9d1aa;background:#e3f7e3;"></div>
<div style="position:absolute;left:75px;top:589px;width:20px;height:81px;background:#a3c6a4;"></div>
<div style="position:absolute;left:105.3px;top:606.38px;font-size:15.5px;line-height:15.5px;color:#111111;font-weight:normal;letter-spacing:0.446px;white-space:nowrap;">Mandant</div>
<div style="position:absolute;left:377.6px;top:606.38px;font-size:15.5px;line-height:15.5px;color:#111111;font-weight:normal;letter-spacing:0.269px;white-space:nowrap;">Herr Antoine Uecker</div>
<div style="position:absolute;left:852.6px;top:606.38px;font-size:15.5px;line-height:15.5px;color:#111111;font-weight:normal;letter-spacing:0.518px;white-space:nowrap;">+49 631213890</div>
<div style="position:absolute;left:1122px;top:606.38px;font-size:15.5px;line-height:15.5px;color:#111111;font-weight:normal;letter-spacing:-0.115px;white-space:nowrap;">Info: RS vorhanden</div>
<div style="position:absolute;left:1649px;top:595px;width:171px;height:35px;background:#03ad19;box-shadow:0 0 4px rgba(0,0,0,0.12);"></div>
<div style="position:absolute;left:1434.5px;width:600px;top:605.46px;text-align:center;font-size:16px;line-height:16px;color:#fff;font-weight:normal;letter-spacing:0px;white-space:nowrap;"><span style="display:inline-block;transform:scaleX(0.72);transform-origin:50% 0;">Gut</span></div>
<div style="position:absolute;left:1830px;top:595px;width:71px;height:35px;background:#1c6239;box-shadow:0 0 4px rgba(0,0,0,0.12);"></div>
<div style="position:absolute;left:1565.5px;width:600px;top:605.46px;text-align:center;font-size:16px;line-height:16px;color:#fff;font-weight:normal;letter-spacing:0px;white-space:nowrap;"><span style="display:inline-block;transform:scaleX(0.72);transform-origin:50% 0;">Öffnen</span></div>
<div style="position:absolute;left:377px;top:625px;width:211px;height:34px;background:#ffa500;"></div>
<svg style="position:absolute;left:377px;top:625px;" width="211" height="34" viewBox="0 0 211 34"><path d="M17.2 6.6 L28.6 26.6 Q29.3 28 27.8 28 H6.6 Q5.1 28 5.8 26.6 Z" fill="#fff" stroke="#fff" stroke-width="2" stroke-linejoin="round"/><path d="M17.2 13 V20.5" stroke="#ffa500" stroke-width="2.4"/><circle cx="17.2" cy="23.9" r="1.3" fill="#ffa500"/></svg>
<div style="position:absolute;left:418.6px;top:635.30px;font-size:15px;line-height:15px;color:#ffffff;font-weight:normal;letter-spacing:0.304px;white-space:nowrap;">Zugangsdaten versandt</div>
<div style="position:absolute;left:94px;top:675px;width:1818px;height:71.5px;box-sizing:border-box;border:1px solid #c9c9c9;background:#fff;"></div>
<div style="position:absolute;left:105.3px;top:692.38px;font-size:15.5px;line-height:15.5px;color:#111111;font-weight:normal;letter-spacing:0.088px;white-space:nowrap;">Rechtsschutzversicherung</div>
<div style="position:absolute;left:377.6px;top:692.38px;font-size:15.5px;line-height:15.5px;color:#111111;font-weight:normal;letter-spacing:-0.109px;white-space:nowrap;">ERSTE Allgemeine Versicherungs-AG</div>
<div style="position:absolute;left:852.6px;top:692.38px;font-size:15.5px;line-height:15.5px;color:#111111;font-weight:normal;letter-spacing:0.518px;white-space:nowrap;">+49 316354605</div>
<div style="position:absolute;left:1122px;top:692.38px;font-size:15.5px;line-height:15.5px;color:#111111;font-weight:normal;letter-spacing:0.012px;white-space:nowrap;">Vorgangsnr.: ERS-4663389</div>
<div style="position:absolute;left:1122px;top:717.88px;font-size:15.5px;line-height:15.5px;color:#111111;font-weight:normal;letter-spacing:0.18px;white-space:nowrap;">Info: Kostenschutz bestätigt</div>
<div style="position:absolute;left:1649px;top:681px;width:171px;height:35px;background:#00600d;box-shadow:0 0 4px rgba(0,0,0,0.12);"></div>
<div style="position:absolute;left:1434.5px;width:600px;top:691.46px;text-align:center;font-size:16px;line-height:16px;color:#fff;font-weight:normal;letter-spacing:0px;white-space:nowrap;"><span style="display:inline-block;transform:scaleX(0.72);transform-origin:50% 0;">Sehr gut</span></div>
<div style="position:absolute;left:1830px;top:681px;width:71px;height:35px;background:#1c6239;box-shadow:0 0 4px rgba(0,0,0,0.12);"></div>
<div style="position:absolute;left:1565.5px;width:600px;top:691.46px;text-align:center;font-size:16px;line-height:16px;color:#fff;font-weight:normal;letter-spacing:0px;white-space:nowrap;"><span style="display:inline-block;transform:scaleX(0.72);transform-origin:50% 0;">Öffnen</span></div>
<div style="position:absolute;left:94px;top:752px;width:1818px;height:71.5px;box-sizing:border-box;border:1px solid #c9c9c9;background:#fff;"></div>
<div style="position:absolute;left:105.3px;top:769.38px;font-size:15.5px;line-height:15.5px;color:#111111;font-weight:normal;letter-spacing:0.45px;white-space:nowrap;">Haftpflicht- und</div>
<div style="position:absolute;left:105.3px;top:794.28px;font-size:15.5px;line-height:15.5px;color:#111111;font-weight:normal;letter-spacing:0.135px;white-space:nowrap;">Teilkaskoversicherung</div>
<div style="position:absolute;left:377.6px;top:769.38px;font-size:15.5px;line-height:15.5px;color:#111111;font-weight:normal;letter-spacing:0.084px;white-space:nowrap;">NECKURA Allgemeine Versicherungs-AG</div>
<div style="position:absolute;left:852.6px;top:769.38px;font-size:15.5px;line-height:15.5px;color:#111111;font-weight:normal;letter-spacing:0.518px;white-space:nowrap;">+49 448635460</div>
<div style="position:absolute;left:1122px;top:769.38px;font-size:15.5px;line-height:15.5px;color:#111111;font-weight:normal;letter-spacing:0.066px;white-space:nowrap;">Vorgangsnr.: NEC-238813</div>
<div style="position:absolute;left:1649px;top:758px;width:171px;height:35px;background:#03ad19;box-shadow:0 0 4px rgba(0,0,0,0.12);"></div>
<div style="position:absolute;left:1434.5px;width:600px;top:768.46px;text-align:center;font-size:16px;line-height:16px;color:#fff;font-weight:normal;letter-spacing:0px;white-space:nowrap;"><span style="display:inline-block;transform:scaleX(0.72);transform-origin:50% 0;">Gut</span></div>
<div style="position:absolute;left:1830px;top:758px;width:71px;height:35px;background:#1c6239;box-shadow:0 0 4px rgba(0,0,0,0.12);"></div>
<div style="position:absolute;left:1565.5px;width:600px;top:768.46px;text-align:center;font-size:16px;line-height:16px;color:#fff;font-weight:normal;letter-spacing:0px;white-space:nowrap;"><span style="display:inline-block;transform:scaleX(0.72);transform-origin:50% 0;">Öffnen</span></div>
<div style="position:absolute;left:75px;top:839px;width:1837px;height:47px;box-sizing:border-box;border:1px solid #d9b6b2;background:#f3dfdd;"></div>
<div style="position:absolute;left:75px;top:839px;width:20px;height:47px;background:#c6a6a0;"></div>
<div style="position:absolute;left:105.3px;top:856.38px;font-size:15.5px;line-height:15.5px;color:#111111;font-weight:normal;letter-spacing:-0.16px;white-space:nowrap;">Gegner</div>
<div style="position:absolute;left:377.6px;top:856.38px;font-size:15.5px;line-height:15.5px;color:#111111;font-weight:normal;letter-spacing:-0.042px;white-space:nowrap;">Frau Elina Foerster</div>
<div style="position:absolute;left:852.6px;top:856.38px;font-size:15.5px;line-height:15.5px;color:#111111;font-weight:normal;letter-spacing:0.518px;white-space:nowrap;">+49 725333188</div>
<div style="position:absolute;left:1649px;top:845px;width:171px;height:35px;background:#d35400;box-shadow:0 0 4px rgba(0,0,0,0.12);"></div>
<div style="position:absolute;left:1434.5px;width:600px;top:855.46px;text-align:center;font-size:16px;line-height:16px;color:#fff;font-weight:normal;letter-spacing:0px;white-space:nowrap;"><span style="display:inline-block;transform:scaleX(0.72);transform-origin:50% 0;">Mangelhaft</span></div>
<div style="position:absolute;left:1830px;top:845px;width:71px;height:35px;background:#1c6239;box-shadow:0 0 4px rgba(0,0,0,0.12);"></div>
<div style="position:absolute;left:1565.5px;width:600px;top:855.46px;text-align:center;font-size:16px;line-height:16px;color:#fff;font-weight:normal;letter-spacing:0px;white-space:nowrap;"><span style="display:inline-block;transform:scaleX(0.72);transform-origin:50% 0;">Öffnen</span></div>
<div style="position:absolute;left:94px;top:891px;width:1818px;height:47px;box-sizing:border-box;border:1px solid #c9c9c9;background:#fff;"></div>
<div style="position:absolute;left:105.3px;top:908.38px;font-size:15.5px;line-height:15.5px;color:#111111;font-weight:normal;letter-spacing:0.415px;white-space:nowrap;">Haftpflichtversicherung</div>
<div style="position:absolute;left:377.6px;top:908.38px;font-size:15.5px;line-height:15.5px;color:#111111;font-weight:normal;letter-spacing:0.165px;white-space:nowrap;">Deutscher Herold Allgemeine Versicherung AG</div>
<div style="position:absolute;left:1122px;top:908.38px;font-size:15.5px;line-height:15.5px;color:#111111;font-weight:normal;letter-spacing:0.166px;white-space:nowrap;">Vorgangsnr.: DEU-6286066</div>
<div style="position:absolute;left:1649px;top:897px;width:171px;height:35px;background:#03ad19;box-shadow:0 0 4px rgba(0,0,0,0.12);"></div>
<div style="position:absolute;left:1434.5px;width:600px;top:907.46px;text-align:center;font-size:16px;line-height:16px;color:#fff;font-weight:normal;letter-spacing:0px;white-space:nowrap;"><span style="display:inline-block;transform:scaleX(0.72);transform-origin:50% 0;">Gut</span></div>
<div style="position:absolute;left:1830px;top:897px;width:71px;height:35px;background:#1c6239;box-shadow:0 0 4px rgba(0,0,0,0.12);"></div>
<div style="position:absolute;left:1565.5px;width:600px;top:907.46px;text-align:center;font-size:16px;line-height:16px;color:#fff;font-weight:normal;letter-spacing:0px;white-space:nowrap;"><span style="display:inline-block;transform:scaleX(0.72);transform-origin:50% 0;">Öffnen</span></div>
<div style="position:absolute;left:75px;top:953px;width:1837px;height:47px;box-sizing:border-box;border:1px solid #c9c9c9;background:#eeecea;"></div>
<div style="position:absolute;left:75px;top:953px;width:20px;height:47px;background:#bebebe;"></div>
<div style="position:absolute;left:105.3px;top:970.38px;font-size:15.5px;line-height:15.5px;color:#111111;font-weight:normal;letter-spacing:0.211px;white-space:nowrap;">Polizeidienststelle</div>
<div style="position:absolute;left:377.6px;top:970.38px;font-size:15.5px;line-height:15.5px;color:#111111;font-weight:normal;letter-spacing:0.216px;white-space:nowrap;">Polizeidienststelle 31</div>
<div style="position:absolute;left:852.6px;top:970.38px;font-size:15.5px;line-height:15.5px;color:#111111;font-weight:normal;letter-spacing:0.467px;white-space:nowrap;">+49 84792697</div>
<div style="position:absolute;left:1122px;top:970.38px;font-size:15.5px;line-height:15.5px;color:#111111;font-weight:normal;letter-spacing:0.071px;white-space:nowrap;">Vorgangsnr.: POL-7510146</div>
<div style="position:absolute;left:1649px;top:959px;width:171px;height:35px;background:#d35400;box-shadow:0 0 4px rgba(0,0,0,0.12);"></div>
<div style="position:absolute;left:1434.5px;width:600px;top:969.46px;text-align:center;font-size:16px;line-height:16px;color:#fff;font-weight:normal;letter-spacing:0px;white-space:nowrap;"><span style="display:inline-block;transform:scaleX(0.72);transform-origin:50% 0;">Mangelhaft</span></div>
<div style="position:absolute;left:1830px;top:959px;width:71px;height:35px;background:#1c6239;box-shadow:0 0 4px rgba(0,0,0,0.12);"></div>
<div style="position:absolute;left:1565.5px;width:600px;top:969.46px;text-align:center;font-size:16px;line-height:16px;color:#fff;font-weight:normal;letter-spacing:0px;white-space:nowrap;"><span style="display:inline-block;transform:scaleX(0.72);transform-origin:50% 0;">Öffnen</span></div>
<div style="position:absolute;left:75px;top:1015px;width:1837px;height:47px;box-sizing:border-box;border:1px solid #c9c9c9;background:#eeecea;"></div>
<div style="position:absolute;left:75px;top:1015px;width:20px;height:47px;background:#bebebe;"></div>
<div style="position:absolute;left:105.3px;top:1032.38px;font-size:15.5px;line-height:15.5px;color:#111111;font-weight:normal;letter-spacing:-0.188px;white-space:nowrap;">Zeuge</div>
<div style="position:absolute;left:377.6px;top:1032.38px;font-size:15.5px;line-height:15.5px;color:#111111;font-weight:normal;letter-spacing:0.027px;white-space:nowrap;">Herr Lauren Schün</div>
<div style="position:absolute;left:852.6px;top:1032.38px;font-size:15.5px;line-height:15.5px;color:#111111;font-weight:normal;letter-spacing:0.518px;white-space:nowrap;">+49 340675304</div>
<div style="position:absolute;left:1649px;top:1021px;width:171px;height:35px;background:#8b0e0e;box-shadow:0 0 4px rgba(0,0,0,0.12);"></div>
<div style="position:absolute;left:1434.5px;width:600px;top:1031.46px;text-align:center;font-size:16px;line-height:16px;color:#fff;font-weight:normal;letter-spacing:0px;white-space:nowrap;"><span style="display:inline-block;transform:scaleX(0.72);transform-origin:50% 0;">Schlecht</span></div>
<div style="position:absolute;left:1830px;top:1021px;width:71px;height:35px;background:#1c6239;box-shadow:0 0 4px rgba(0,0,0,0.12);"></div>
<div style="position:absolute;left:1565.5px;width:600px;top:1031.46px;text-align:center;font-size:16px;line-height:16px;color:#fff;font-weight:normal;letter-spacing:0px;white-space:nowrap;"><span style="display:inline-block;transform:scaleX(0.72);transform-origin:50% 0;">Öffnen</span></div>
</body></html>
